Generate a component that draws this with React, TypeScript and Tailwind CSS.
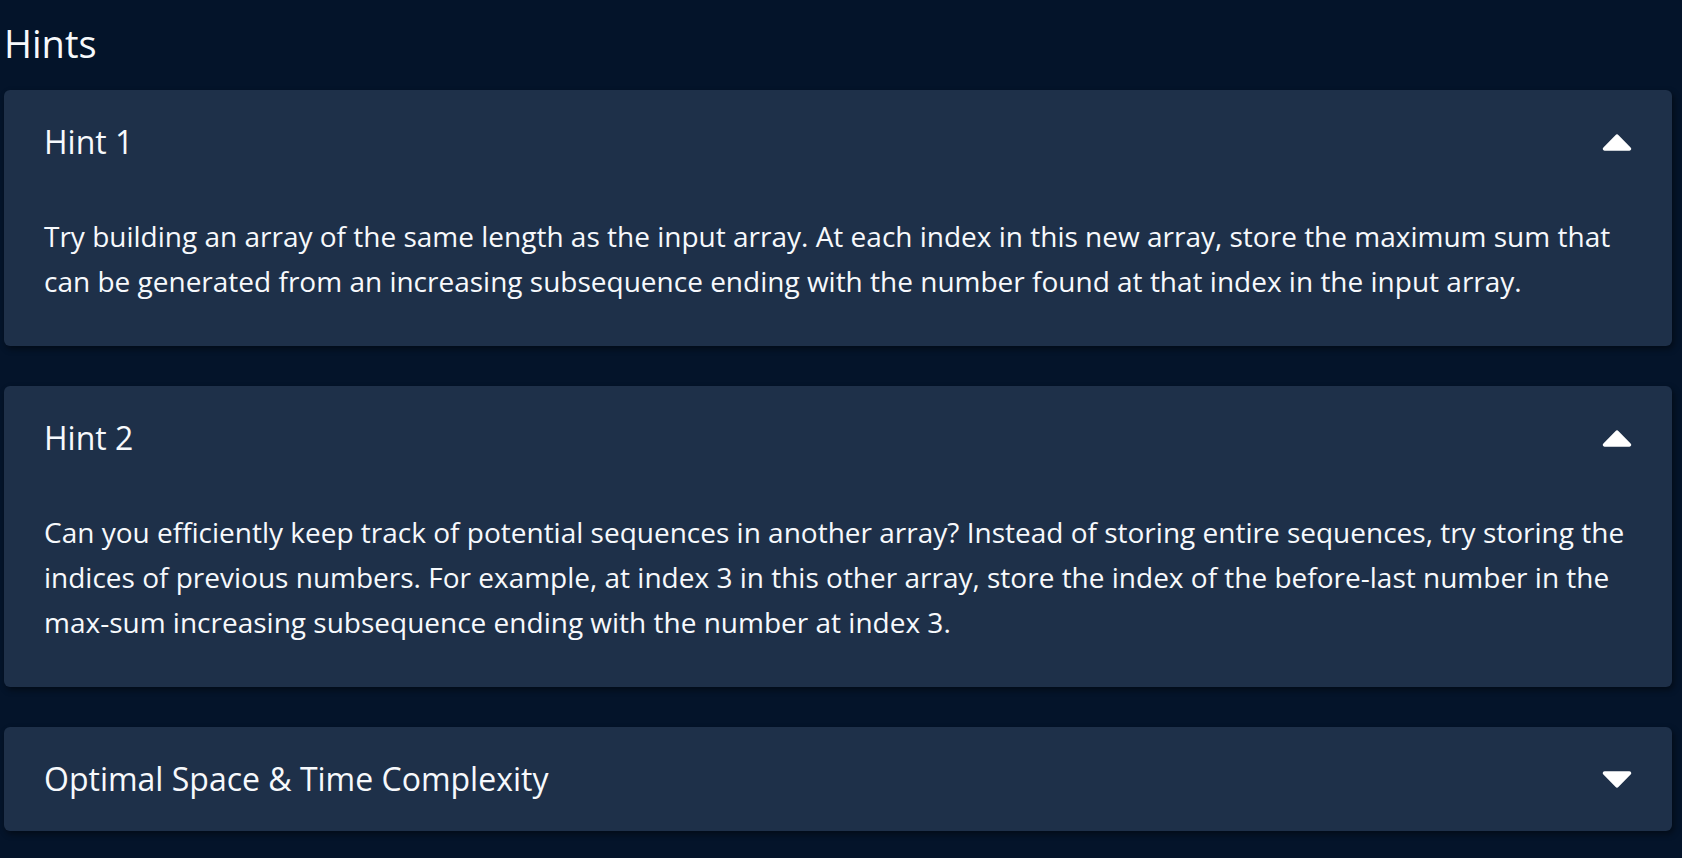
import { useState } from "react";

type Hint = { title: string; body?: string };

const HINTS: Hint[] = [
  {
    title: "Hint 1",
    body: "Try building an array of the same length as the input array. At each index in this new array, store the maximum sum that can be generated from an increasing subsequence ending with the number found at that index in the input array.",
  },
  {
    title: "Hint 2",
    body: "Can you efficiently keep track of potential sequences in another array? Instead of storing entire sequences, try storing the indices of previous numbers. For example, at index 3 in this other array, store the index of the before-last number in the max-sum increasing subsequence ending with the number at index 3.",
  },
  {
    title: "Optimal Space & Time Complexity",
    body: "O(n^2) time | O(n) space - where n is the length of the input array",
  },
];

function Caret({ up }: { up: boolean }) {
  return (
    <svg width="30" height="17" viewBox="0 0 30 17" className={up ? "" : "rotate-180"}>
      <path d="M13.4 1.2a2.2 2.2 0 0 1 3.2 0l12 12.2c1.3 1.3.5 3.3-1.3 3.3H2.7c-1.8 0-2.6-2-1.3-3.3z" fill="#ffffff" />
    </svg>
  );
}

function HintCard({ hint, defaultOpen }: { hint: Hint; defaultOpen: boolean }) {
  const [open, setOpen] = useState(defaultOpen);
  return (
    <div className="ml-1 mr-[10px] rounded-md bg-[#1e3049] shadow-[2px_3px_6px_rgba(0,0,0,0.45)]">
      <button
        onClick={() => setOpen(!open)}
        className="flex h-[104px] w-full items-center justify-between px-10 text-left"
      >
        <span className="text-[32px] leading-[44px] text-[#f7f9fc]">{hint.title}</span>
        <Caret up={open} />
      </button>
      {open && hint.body && (
        <div className="pl-10 pr-[30px] pt-5 pb-[42px] text-[28px] leading-[45px] text-[#f7f9fc]">
          {hint.body}
        </div>
      )}
    </div>
  );
}

export default function App() {
  return (
    <div
      className="min-h-screen bg-[#04142a] pt-4 text-white"
      style={{ fontFamily: '"Open Sans", "Noto Sans", sans-serif' }}
    >
      <h2 className="mb-5 ml-1 text-[38px] font-medium leading-[54px] text-[#f7f9fc]">Hints</h2>
      <div className="flex flex-col gap-10">
        {HINTS.map((h, i) => (
          <HintCard key={h.title} hint={h} defaultOpen={i < 2} />
        ))}
      </div>
    </div>
  );
}
